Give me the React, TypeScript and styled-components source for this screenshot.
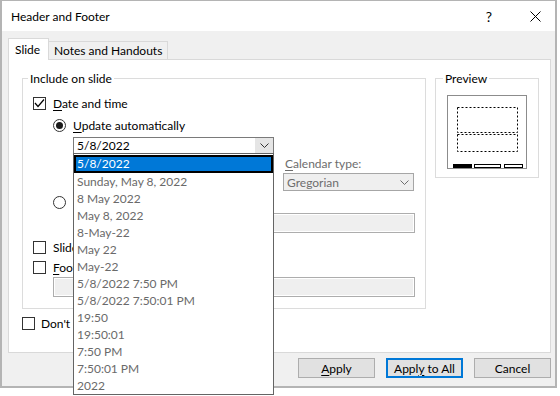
import React from 'react';
import styled, { createGlobalStyle, css } from 'styled-components';

const FONT = `Lato, "Segoe UI", "Noto Sans", sans-serif`;

const Global = createGlobalStyle`
  html, body { margin: 0; padding: 0; background: #ffffff; }
  html, body, #root { min-height: 396px; }
  body { font-family: ${FONT}; font-size: 12px; color: #000; }
  * { box-sizing: border-box; }
`;

const Window = styled.div`
  position: relative;
  width: 557px;
  height: 388px;
  background: #f0f0f0;
  border-style: solid;
  border-color: #b4b4b4;
  border-width: 1px 2px 2px 2px;
  display: flex;
  flex-direction: column;
`;

const TitleBar = styled.div`
  height: 30px;
  flex: none;
  background: #ffffff;
  display: flex;
  align-items: center;
  padding: 0 5px 0 9px;
`;

const Title = styled.div`
  flex: 1;
  font-size: 12px;
  color: #000;
`;

const TitleButton = styled.div<{ $gap?: number }>`
  width: 30px;
  height: 30px;
  display: flex;
  align-items: center;
  justify-content: center;
  font-size: 14px;
  margin-left: ${p => p.$gap ?? 0}px;
`;

const Body = styled.div`
  padding: 7px 0 0 6px;
  display: flex;
  flex-direction: column;
`;

const TabStrip = styled.div`
  position: relative;
  z-index: 1;
  height: 22px;
  margin-bottom: -1px;
  display: flex;
  align-items: flex-end;
`;

const Tab = styled.div<{ $active?: boolean }>`
  display: flex;
  align-items: center;
  font-size: 12px;
  white-space: nowrap;
  border: 1px solid #d9d9d9;
  border-bottom: none;
  ${p =>
    p.$active
      ? css`
          height: 22px;
          width: 41px;
          padding: 0 0 1px 6px;
          background: #ffffff;
        `
      : css`
          height: 18px;
          width: 119px;
          margin-bottom: 1px;
          border-left: none;
          padding: 0 0 0 5px;
          background: #f0f0f0;
        `}
`;

const Panel = styled.div`
  width: 543px;
  height: 294px;
  background: #ffffff;
  border: 1px solid #d9d9d9;
  padding: 18px 0 0 13px;
  display: flex;
  flex-direction: column;
`;

const TopRow = styled.div`
  display: flex;
  align-items: flex-start;
  gap: 9px;
`;

const Group = styled.div<{ $w: number; $h: number; $pad: string }>`
  position: relative;
  width: ${p => p.$w}px;
  height: ${p => p.$h}px;
  border: 1px solid #dcdcdc;
  padding: ${p => p.$pad};
  display: flex;
  flex-direction: column;
`;

const Legend = styled.span<{ $left: number }>`
  position: absolute;
  top: -8px;
  left: ${p => p.$left}px;
  padding: 0 2px;
  background: #ffffff;
  line-height: 15px;
  font-size: 12px;
`;

const OptionRow = styled.div<{ $top: number; $indent?: number; $gap?: number }>`
  display: flex;
  align-items: center;
  height: 13px;
  gap: ${p => p.$gap ?? 7}px;
  margin-top: ${p => p.$top}px;
  margin-left: ${p => p.$indent ?? 0}px;
  font-size: 12px;
  white-space: nowrap;
`;

const Box = styled.div`
  width: 13px;
  height: 13px;
  flex: none;
  border: 1px solid #333333;
  background: #ffffff;
  display: flex;
  align-items: center;
  justify-content: center;
`;

const Circle = styled.div`
  width: 13px;
  height: 13px;
  flex: none;
  border: 1px solid #333333;
  border-radius: 50%;
  background: #ffffff;
  display: flex;
  align-items: center;
  justify-content: center;
`;

const Dot = styled.div`
  width: 7px;
  height: 7px;
  border-radius: 50%;
  background: #1a1a1a;
`;

const Key = styled.span`
  text-decoration: underline;
  text-underline-offset: 2px;
`;

const Combo = styled.div<{ $top: number; $indent?: number; $disabled?: boolean; $h?: number; $w?: number }>`
  height: ${p => p.$h ?? 17}px;
  ${p => (p.$w ? `width: ${p.$w}px;` : '')}
  margin-top: ${p => p.$top}px;
  margin-left: ${p => p.$indent ?? 0}px;
  border: 1px solid ${p => (p.$disabled ? '#a6a6a6' : '#7a7a7a')};
  background: ${p => (p.$disabled ? '#efefef' : '#ffffff')};
  color: ${p => (p.$disabled ? '#6d6d6d' : '#000')};
  display: flex;
  align-items: center;
  font-size: 12px;
  white-space: nowrap;
`;

const ComboText = styled.div`
  flex: 1;
  padding-left: 3px;
  overflow: hidden;
`;

const ComboButton = styled.div<{ $disabled?: boolean }>`
  width: 18px;
  align-self: stretch;
  background: ${p => (p.$disabled ? '#efefef' : '#e5e5e5')};
  display: flex;
  align-items: center;
  justify-content: center;
`;

const SubGrid = styled.div`
  display: grid;
  grid-template-columns: 201px 131px;
  column-gap: 9px;
  margin-left: 40px;
  margin-top: 3px;
`;

const SubCol = styled.div`
  display: flex;
  flex-direction: column;
`;

const FieldLabel = styled.div<{ $disabled?: boolean }>`
  height: 14px;
  line-height: 14px;
  padding-left: 2px;
  font-size: 12px;
  color: ${p => (p.$disabled ? '#6d6d6d' : '#000')};
`;

const TextField = styled.div<{ $top: number; $indent: number }>`
  height: 20px;
  margin-top: ${p => p.$top}px;
  margin-left: ${p => p.$indent}px;
  border: 1px solid #adadad;
  background: #efefef;
  box-shadow: inset 0 0 0 1px #ffffff;
`;

const ButtonRow = styled.div`
  width: 543px;
  display: flex;
  justify-content: flex-end;
  gap: 11px;
  margin-top: 5px;
`;

const Button = styled.div<{ $primary?: boolean }>`
  width: 77px;
  height: 20px;
  background: #e1e1e1;
  border: 1px solid ${p => (p.$primary ? '#0078d7' : '#adadad')};
  box-shadow: ${p => (p.$primary ? 'inset 0 0 0 1px #0078d7' : 'none')};
  display: flex;
  align-items: center;
  justify-content: center;
  font-size: 12px;
`;

const Popup = styled.div`
  position: absolute;
  left: 71px;
  top: 152px;
  width: 201px;
  height: 242px;
  background: #ffffff;
  border: 1px solid #646464;
  padding-top: 1px;
  z-index: 5;
  display: flex;
  flex-direction: column;
`;

const Item = styled.div<{ $selected?: boolean }>`
  flex: none;
  height: ${p => (p.$selected ? 18 : 17)}px;
  line-height: ${p => (p.$selected ? 14 : 17)}px;
  font-size: 12px;
  white-space: nowrap;
  ${p =>
    p.$selected
      ? css`
          background: #0078d7;
          color: #ffffff;
          border: 2px solid #000000;
          padding-left: 1px;
        `
      : css`
          color: #6a6a6a;
          padding-left: 3px;
        `}
`;

const Chevron = ({ color = '#333' }: { color?: string }) => (
  <svg width="9" height="5" viewBox="0 0 9 5">
    <polyline points="0.5,0.5 4.5,4.5 8.5,0.5" fill="none" stroke={color} strokeWidth="1" />
  </svg>
);

const CheckMark = () => (
  <svg width="11" height="11" viewBox="0 0 11 11">
    <polyline points="1,5 4,8.5 10,1.5" fill="none" stroke="#000" strokeWidth="1.2" />
  </svg>
);

const CloseIcon = () => (
  <svg width="11" height="11" viewBox="0 0 11 11">
    <line x1="0.5" y1="0.5" x2="10.5" y2="10.5" stroke="#000" strokeWidth="1" />
    <line x1="10.5" y1="0.5" x2="0.5" y2="10.5" stroke="#000" strokeWidth="1" />
  </svg>
);

const PreviewSlide = () => (
  <svg width="80" height="74" viewBox="0 0 80 74" style={{ display: 'block' }}>
    <rect x="0.5" y="0.5" width="79" height="73" fill="#fff" stroke="#8c8c8c" />
    <rect x="10.5" y="12.5" width="60" height="25" fill="none" stroke="#000" strokeDasharray="2 2" />
    <rect x="10.5" y="39.5" width="60" height="17" fill="none" stroke="#000" strokeDasharray="2 2" />
    <rect x="6" y="69" width="19" height="4" fill="#000" />
    <rect x="27.5" y="69.5" width="26" height="3" fill="#fff" stroke="#000" />
    <rect x="57.5" y="69.5" width="18" height="3" fill="#fff" stroke="#000" />
  </svg>
);

const formats = [
  'Sunday, May 8, 2022',
  '8 May 2022',
  'May 8, 2022',
  '8-May-22',
  'May 22',
  'May-22',
  '5/8/2022 7:50 PM',
  '5/8/2022 7:50:01 PM',
  '19:50',
  '19:50:01',
  '7:50 PM',
  '7:50:01 PM',
  '2022',
];

export default function App() {
  return (
    <>
      <Global />
      <Window>
        <TitleBar>
          <Title>Header and Footer</Title>
          <TitleButton>?</TitleButton>
          <TitleButton $gap={16}>
            <CloseIcon />
          </TitleButton>
        </TitleBar>
        <Body>
          <TabStrip>
            <Tab $active>Slide</Tab>
            <Tab>Notes and Handouts</Tab>
          </TabStrip>
          <Panel>
            <TopRow>
              <Group $w={404} $h={231} $pad="0 10px 0 10px">
                <Legend $left={5}>Include on slide</Legend>
                <OptionRow $top={18}>
                  <Box>
                    <CheckMark />
                  </Box>
                  <span>
                    <Key>D</Key>ate and time
                  </span>
                </OptionRow>
                <OptionRow $top={9} $indent={20}>
                  <Circle>
                    <Dot />
                  </Circle>
                  <span>
                    <Key>U</Key>pdate automatically
                  </span>
                </OptionRow>
                <Combo $top={5} $indent={40} $w={201}>
                  <ComboText>5/8/2022</ComboText>
                  <ComboButton>
                    <Chevron />
                  </ComboButton>
                </Combo>
                <SubGrid>
                  <SubCol />
                  <SubCol>
                    <FieldLabel $disabled>
                      <Key>C</Key>alendar type:
                    </FieldLabel>
                    <Combo $top={2} $h={18} $disabled>
                      <ComboText>Gregorian</ComboText>
                      <ComboButton $disabled>
                        <Chevron color="#6d6d6d" />
                      </ComboButton>
                    </Combo>
                  </SubCol>
                </SubGrid>
                <OptionRow $top={5} $indent={20}>
                  <Circle />
                </OptionRow>
                <TextField $top={4} $indent={40} />
                <OptionRow $top={8}>
                  <Box />
                  <span>Slide number</span>
                </OptionRow>
                <OptionRow $top={7}>
                  <Box />
                  <span>
                    <Key>F</Key>ooter
                  </span>
                </OptionRow>
                <TextField $top={3} $indent={20} />
              </Group>
              <Group $w={104} $h={100} $pad="16px 0 0 11px">
                <Legend $left={7}>Preview</Legend>
                <PreviewSlide />
              </Group>
            </TopRow>
            <OptionRow $top={8} $gap={6}>
              <Box />
              <span>Don't show on title slide</span>
            </OptionRow>
          </Panel>
          <ButtonRow>
            <Button>
              <span>
                <Key>A</Key>pply
              </span>
            </Button>
            <Button $primary>
              <span>
                Appl<Key>y</Key> to All
              </span>
            </Button>
            <Button>Cancel</Button>
          </ButtonRow>
        </Body>
        <Popup>
          <Item $selected>5/8/2022</Item>
          {formats.map(f => (
            <Item key={f}>{f}</Item>
          ))}
        </Popup>
      </Window>
    </>
  );
}
